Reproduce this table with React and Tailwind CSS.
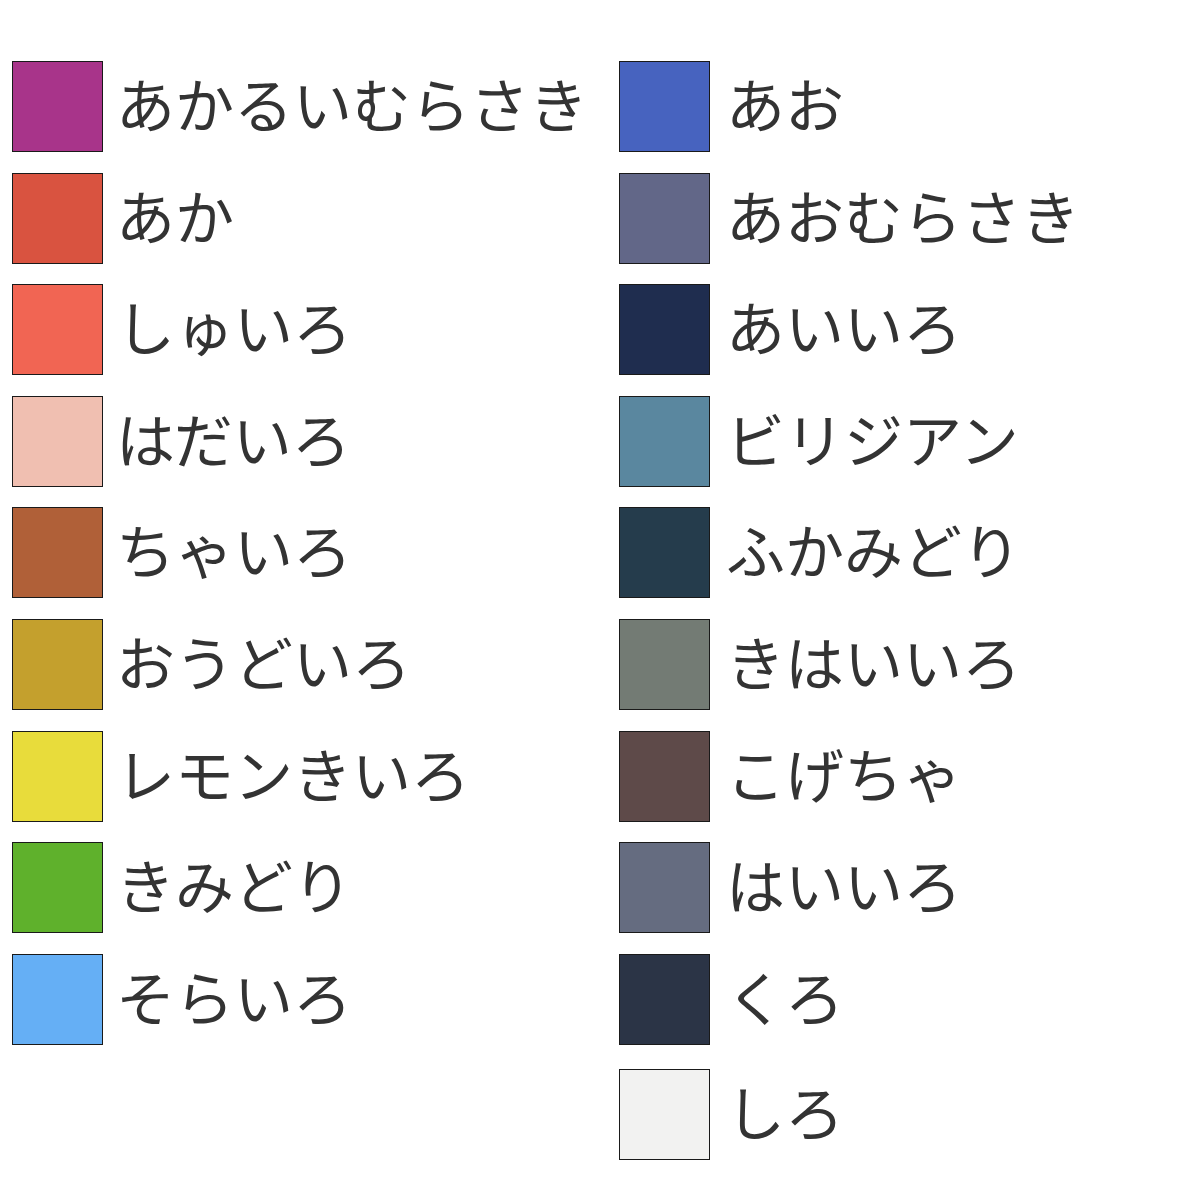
const left = [
  { name: 'あかるいむらさき', color: '#a8348a' },
  { name: 'あか', color: '#d95340' },
  { name: 'しゅいろ', color: '#f16553' },
  { name: 'はだいろ', color: '#f0bfb1' },
  { name: 'ちゃいろ', color: '#b06038' },
  { name: 'おうどいろ', color: '#c4a02d' },
  { name: 'レモンきいろ', color: '#e8dc3b' },
  { name: 'きみどり', color: '#5fb12c' },
  { name: 'そらいろ', color: '#65aff5' },
];

const right = [
  { name: 'あお', color: '#4763bf' },
  { name: 'あおむらさき', color: '#626788' },
  { name: 'あいいろ', color: '#1f2d4f' },
  { name: 'ビリジアン', color: '#5a879f' },
  { name: 'ふかみどり', color: '#253c4c' },
  { name: 'きはいいろ', color: '#737b74' },
  { name: 'こげちゃ', color: '#5e4a49' },
  { name: 'はいいろ', color: '#656c80' },
  { name: 'くろ', color: '#2b3446' },
  { name: 'しろ', color: '#f2f2f1' },
];

function Swatch({ name, color, last, wide }) {
  return (
    <div className={last ? 'flex items-center h-[91px] mt-[4px]' : 'flex items-center h-[91px]'}>
      <div
        className="w-[91px] h-[91px] shrink-0 border border-[#1a1a1a]"
        style={{ backgroundColor: color }}
      />
      <span
        className={
          wide
            ? 'ml-[16px] text-[59px] leading-none text-[#333333] whitespace-nowrap -translate-y-[4px]'
            : 'ml-[13px] text-[59px] leading-none text-[#333333] whitespace-nowrap -translate-y-[4px]'
        }
      >
        {name}
      </span>
    </div>
  );
}

export default function App() {
  return (
    <div
      className="w-[1200px] h-[1200px] bg-white pt-[61px] pl-[12px] grid grid-cols-[607px_auto] items-start"
      style={{ fontFamily: '"Noto Sans CJK JP", "Noto Sans", sans-serif' }}
    >
      <div className="flex flex-col gap-[20.6px]">
        {left.map((c) => (
          <Swatch key={c.name} {...c} />
        ))}
      </div>
      <div className="flex flex-col gap-[20.6px]">
        {right.map((c, i) => (
          <Swatch key={c.name} {...c} wide last={i === right.length - 1} />
        ))}
      </div>
    </div>
  );
}
